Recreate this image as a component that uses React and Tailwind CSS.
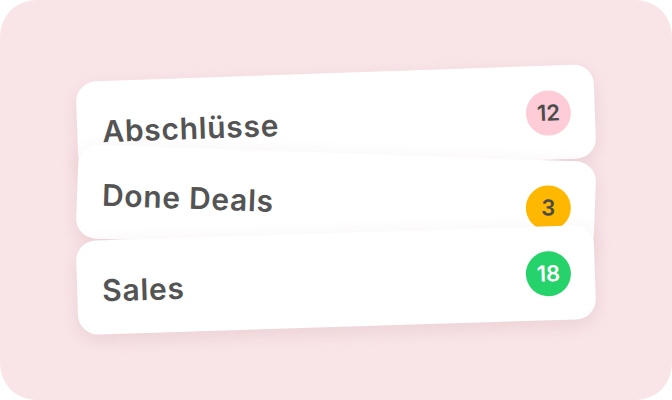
export default function App() {
  const rows = [
    { label: "Abschlüsse", num: "12", badge: "bg-[#fdccd6] text-[#4b4b4b]", rot: "-rotate-2", extra: "" },
    { label: "Done Deals", num: "3", badge: "bg-[#ffb800] text-[#4b4b4b]", rot: "rotate-2", extra: "-mt-[14px]" },
    { label: "Sales", num: "18", badge: "bg-[#26d26a] text-white", rot: "-rotate-[1.8deg]", extra: "-mt-[14px]" },
  ];
  return (
    <div className="w-[672px] h-[400px] bg-white" style={{ fontFamily: "Inter, 'Noto Sans', sans-serif" }}>
      <div className="w-full h-full rounded-[36px] bg-[#f9e5e8] flex flex-col items-center justify-center">
        {rows.map((r) => (
          <div
            key={r.label}
            className={`w-[518px] h-[94px] rounded-[20px] bg-white flex items-center justify-between pl-[25px] pr-[24px] shadow-[0_6px_18px_rgba(180,120,130,0.18)] ${r.rot} ${r.extra}`}
          >
            <span className="text-[30px] font-semibold text-[#545454] tracking-[0.7px] pt-[6px]">{r.label}</span>
            <span className={`w-[45px] h-[45px] rounded-full flex items-center justify-center text-[22px] font-semibold ${r.badge}`}>
              {r.num}
            </span>
          </div>
        ))}
      </div>
    </div>
  );
}
